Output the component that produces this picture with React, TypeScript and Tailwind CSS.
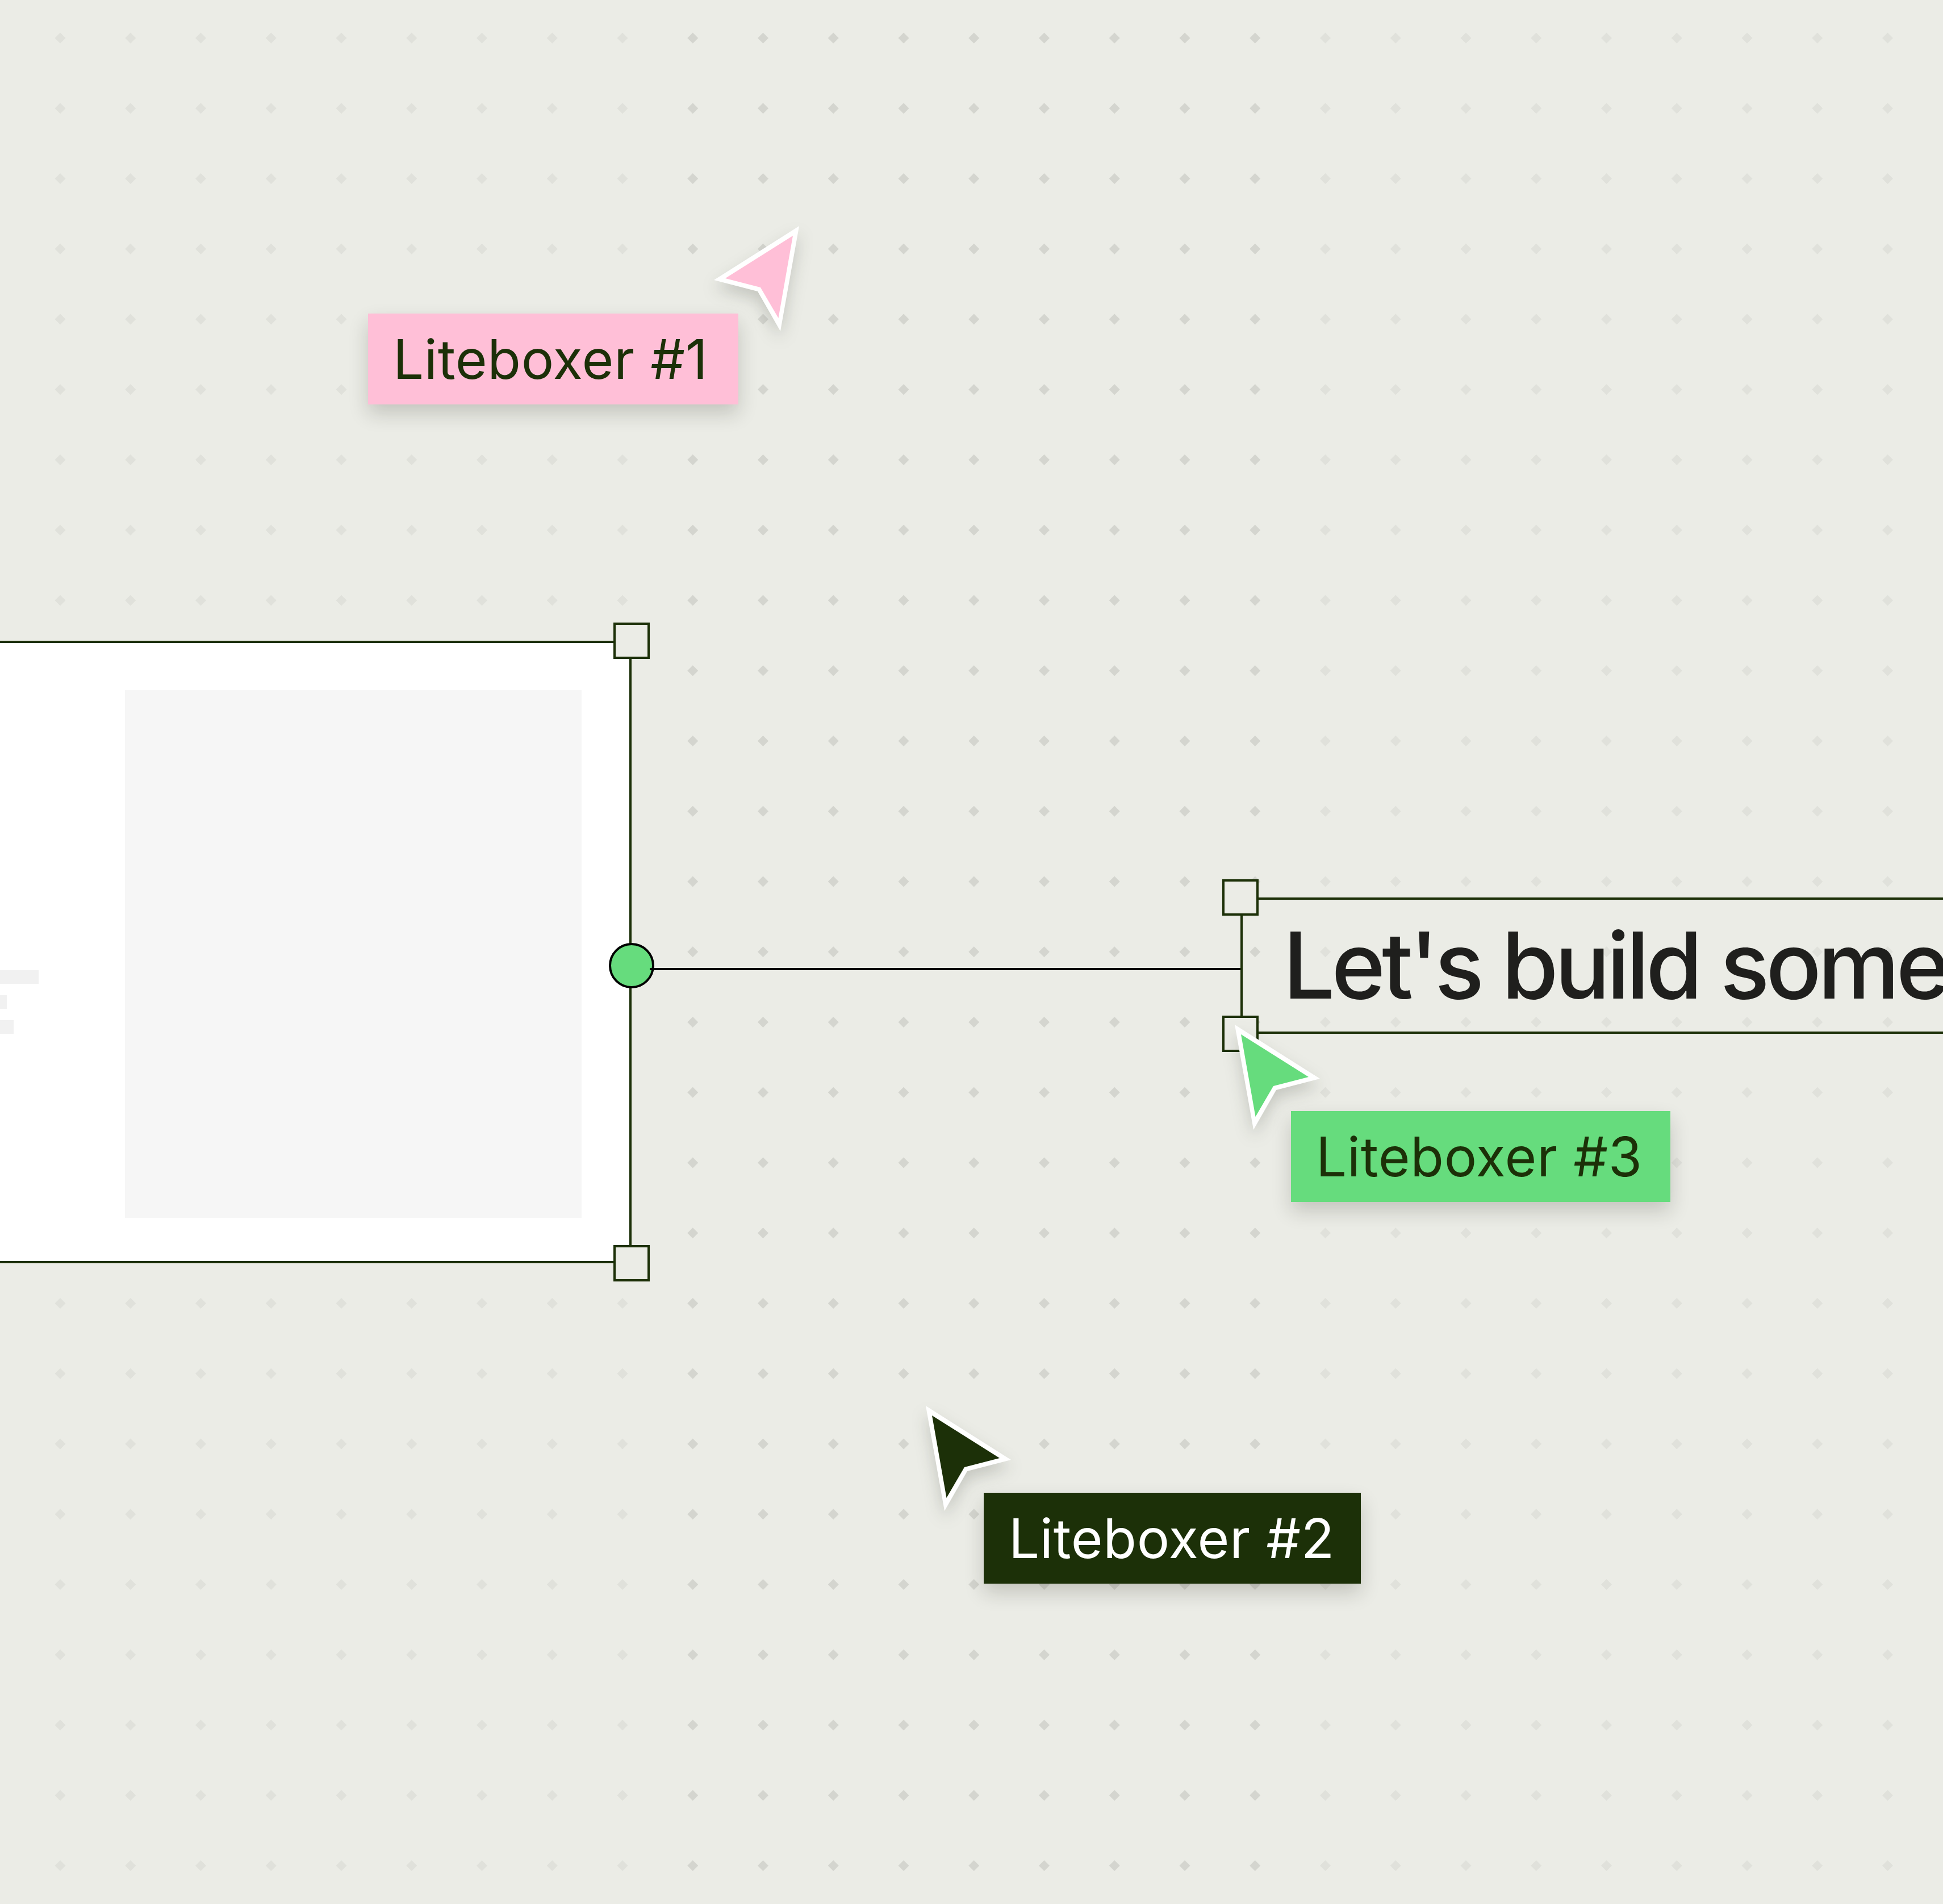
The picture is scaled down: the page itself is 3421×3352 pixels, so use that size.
/**
 * Collaborative canvas scene: a dotted board with two selected frames,
 * the connector between them and the live cursors of three visitors.
 */
import clsx from "clsx";

const STEP = 123.75;
const GRID_SIZE = 27;
const GRID_LINES = Array.from({ length: GRID_SIZE }, (_, i) => i);

type CursorProps = {
  fill: string;
  className: string;
  mirrored?: boolean;
};

type LabelProps = {
  text: string;
  className: string;
};

/**
 * Diamond grid. The middle columns are a bit darker than the rest.
 */
function DotGrid() {
  return (
    <svg className="absolute inset-0" width="3421" height="3352" viewBox="0 0 3421 3352">
      {GRID_LINES.map((row) =>
        GRID_LINES.map((col) => {
          const x = 106 + col * STEP;
          const y = 67 + row * STEP;
          const dark = col >= 9 && col <= 17;
          return (
            <path
              key={`${row}-${col}`}
              d={`M${x} ${y - 9.5}l9.5 9.5l-9.5 9.5l-9.5 -9.5z`}
              fill={dark ? "#d4d5cf" : "#e0e1db"}
            />
          );
        })
      )}
    </svg>
  );
}

/** Square resize handle */
function Handle({ className }: { className: string }) {
  return <div className={clsx("absolute size-16 border-4 border-[#1c3008] bg-[#ebece6]", className)} />;
}

function Cursor({ fill, className, mirrored }: CursorProps) {
  return (
    <svg
      className={clsx(
        "absolute h-[185px] w-[150px] overflow-visible drop-shadow-[0_14px_14px_rgba(30,32,20,0.18)]",
        className
      )}
      viewBox="0 0 150 185"
    >
      <g transform={mirrored ? "translate(150 0) scale(-1 1)" : undefined}>
        <path d="M0 0L150 95L73 115L33 185Z" fill="#fff" />
        <path d="M11 17L130 92L68 108L36.5 162Z" fill={fill} />
      </g>
    </svg>
  );
}

function Label({ text, className }: LabelProps) {
  return (
    <div
      className={clsx(
        "absolute flex h-40 items-center whitespace-nowrap pl-11 text-[96px] leading-none tracking-[0.006em] shadow-[0_16px_32px_rgba(30,32,20,0.19)]",
        className
      )}
    >
      {text}
    </div>
  );
}

/** White card on the left, cut off by the edge of the board */
function CardFrame() {
  return (
    <div className="absolute left-0 top-[1128px] flex h-[1096px] w-[1112px] justify-between border-y-4 border-r-4 border-[#1c3008] bg-white pr-[84px] pt-[83px]">
      <div className="flex flex-col gap-5 pt-[493px]">
        <div className="h-6 w-[68px] bg-[#f1f1f1]" />
        <div className="h-6 w-3 bg-[#f1f1f1]" />
        <div className="h-6 w-6 bg-[#f1f1f1]" />
      </div>
      <div className="h-[929px] w-[804px] bg-[#f6f6f6]" />
      <Handle className="-right-9 -top-9" />
      <Handle className="-bottom-9 -right-9" />
    </div>
  );
}

/** Headline frame on the right, it runs out of the board */
function HeadlineFrame() {
  return (
    <div className="absolute left-[2184px] top-[1580px] h-60 w-[1300px] border-4 border-[#1c3008]">
      <h1 className="whitespace-nowrap pl-[71px] pt-[34px] font-['Inter',sans-serif] text-[162px] font-medium leading-[162px] tracking-[-0.039em] text-[#1f1f1d]">
        Let's build some
      </h1>
      <Handle className="-left-9 -top-9" />
      <Handle className="-bottom-9 -left-9" />
    </div>
  );
}

export default function App() {
  return (
    <main className="relative h-[3352px] w-[3421px] overflow-hidden bg-[#ebece6] font-['Inter',sans-serif] text-[#1c3008]">
      <DotGrid />
      <CardFrame />
      <HeadlineFrame />

      {/* Connector */}
      <div className="absolute left-[1072px] top-[1660px] size-20 rounded-full border-4 border-black bg-[#66dc7d]" />
      <div className="absolute left-[1144px] top-[1704px] h-1 w-[1040px] bg-black" />

      {/* Visitors */}
      <Label text="Liteboxer #1" className="left-[648px] top-[552px] w-[652px] bg-[#ffbfd7]" />
      <Cursor fill="#ffbfd7" className="left-[1257px] top-[398px]" mirrored />
      <Label text="Liteboxer #3" className="left-[2273px] top-[1956px] w-[668px] bg-[#66dc7d]" />
      <Cursor fill="#66dc7d" className="left-[2174px] top-[1804px]" />
      <Label text="Liteboxer #2" className="left-[1732px] top-[2628px] w-[664px] bg-[#1c3008] text-white" />
      <Cursor fill="#1c3008" className="left-[1630px] top-[2475px]" />
    </main>
  );
}
